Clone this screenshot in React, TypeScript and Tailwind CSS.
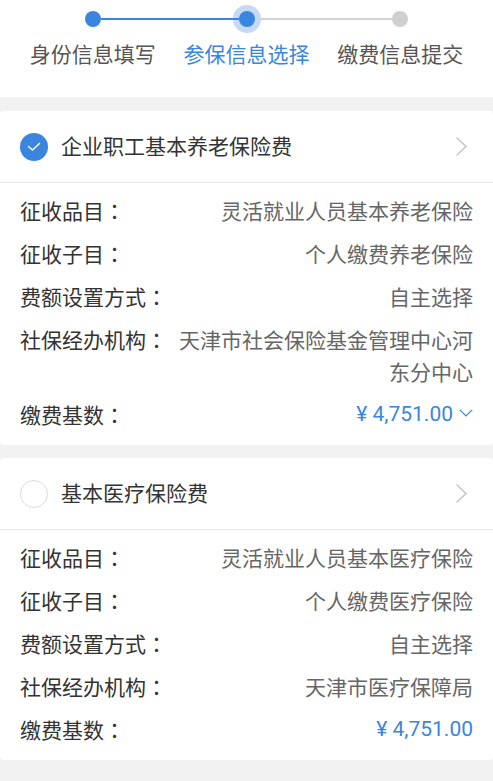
const FONT = { fontFamily: '"Noto Sans CJK SC", "Noto Sans", sans-serif' };
const MONEY_FONT = { fontFamily: 'Roboto, "Noto Sans CJK SC", sans-serif' };
const COLON_FONT = { fontFamily: '"Noto Sans CJK TC", sans-serif' };

interface Row {
  label: string;
  value: string;
  money?: boolean;
  dropdown?: boolean;
}

interface Item {
  title: string;
  checked: boolean;
  rows: Row[];
}

const items: Item[] = [
  {
    title: '企业职工基本养老保险费',
    checked: true,
    rows: [
      { label: '征收品目', value: '灵活就业人员基本养老保险' },
      { label: '征收子目', value: '个人缴费养老保险' },
      { label: '费额设置方式', value: '自主选择' },
      { label: '社保经办机构', value: '天津市社会保险基金管理中心河东分中心' },
      { label: '缴费基数', value: '¥ 4,751.00', money: true, dropdown: true },
    ],
  },
  {
    title: '基本医疗保险费',
    checked: false,
    rows: [
      { label: '征收品目', value: '灵活就业人员基本医疗保险' },
      { label: '征收子目', value: '个人缴费医疗保险' },
      { label: '费额设置方式', value: '自主选择' },
      { label: '社保经办机构', value: '天津市医疗保障局' },
      { label: '缴费基数', value: '¥ 4,751.00', money: true },
    ],
  },
];

export default function App() {
  return (
    <div className="w-[493px] min-h-[781px] bg-[#f2f2f2]" style={FONT}>
      <Steps />
      <div className="mt-[14px]">
        <InsuranceCard item={items[0]} />
      </div>
      <div className="mt-[13px]">
        <InsuranceCard item={items[1]} />
      </div>
    </div>
  );
}

// ============ steps ============

function Steps() {
  const steps = [
    { name: '身份信息填写', left: '', right: 'bg-[#3a86de]', dot: 'done' },
    { name: '参保信息选择', left: 'bg-[#3a86de]', right: 'bg-[#d4d4d4]', dot: 'active' },
    { name: '缴费信息提交', left: 'bg-[#d4d4d4]', right: '', dot: 'todo' },
  ];

  return (
    <div className="bg-white h-[97px] px-4 grid grid-cols-3">
      {steps.map((s) => (
        <div key={s.name} className="flex flex-col items-center">
          <div className="w-full flex items-center mt-[11px] h-4">
            <div className={`flex-1 h-[2px] ${s.left}`} />
            <div
              className={`w-4 h-4 rounded-full shrink-0 ${
                s.dot === 'todo' ? 'bg-[#cfcfcf]' : 'bg-[#3a86de]'
              } ${s.dot === 'active' ? 'shadow-[0_0_0_6px_rgba(58,134,222,0.3)]' : ''}`}
            />
            <div className={`flex-1 h-[2px] ${s.right}`} />
          </div>
          <div
            className={`mt-[11px] text-[21px] leading-[30px] whitespace-nowrap ${
              s.dot === 'active' ? 'text-[#3a86de]' : 'text-[#555555]'
            }`}
          >
            {s.name}
          </div>
        </div>
      ))}
    </div>
  );
}

// ============ card ============

function InsuranceCard({ item }: { item: Item }) {
  return (
    <div className="bg-white rounded-[4px]">
      <div className="h-[72px] flex items-center pl-5 pr-[25px] border-b border-[#e6e6e6]">
        {item.checked ? (
          <div className="w-[28px] h-[28px] rounded-full bg-[#3a86de] flex items-center justify-center shrink-0">
            <svg width="14" height="10" viewBox="0 0 14 10" fill="none">
              <path d="M1.5 4.5 L5.5 8 L12.5 1.5" stroke="white" strokeWidth="1.4" strokeLinecap="round" strokeLinejoin="round" />
            </svg>
          </div>
        ) : (
          <div className="w-[28px] h-[28px] rounded-full border border-[#dcdcdc] shrink-0" />
        )}
        <div className="ml-[13px] mb-[3px] flex-1 text-[21px] text-[#333333] leading-[30px]">{item.title}</div>
        <svg width="13" height="21" viewBox="0 0 13 21" fill="none">
          <path d="M1.5 1.5 L11 10.5 L1.5 19.5" stroke="#c8c8c8" strokeWidth="1.6" />
        </svg>
      </div>
      <div className="pl-5 pr-5 pt-[11px] pb-[15px] flex flex-col gap-[11px]">
        {item.rows.map((r) => (
          <div key={r.label} className="flex items-start gap-[10px] text-[21px] leading-[32px]">
            <div className="shrink-0 text-[#333333]">
              {r.label}
              <span style={COLON_FONT}>：</span>
            </div>
            <div
              className={`flex-1 text-right ${
                r.money ? 'text-[#3a86de]' : 'text-[#666666]'
              }`}
              style={r.money ? MONEY_FONT : undefined}
            >
              {r.value}
              {r.dropdown && (
                <svg className="inline-block ml-[6px] mb-[5px]" width="14" height="8" viewBox="0 0 14 8" fill="none">
                  <path d="M0.8 0.8 L7 7 L13.2 0.8" stroke="#3a86de" strokeWidth="1.2" />
                </svg>
              )}
            </div>
          </div>
        ))}
      </div>
    </div>
  );
}
